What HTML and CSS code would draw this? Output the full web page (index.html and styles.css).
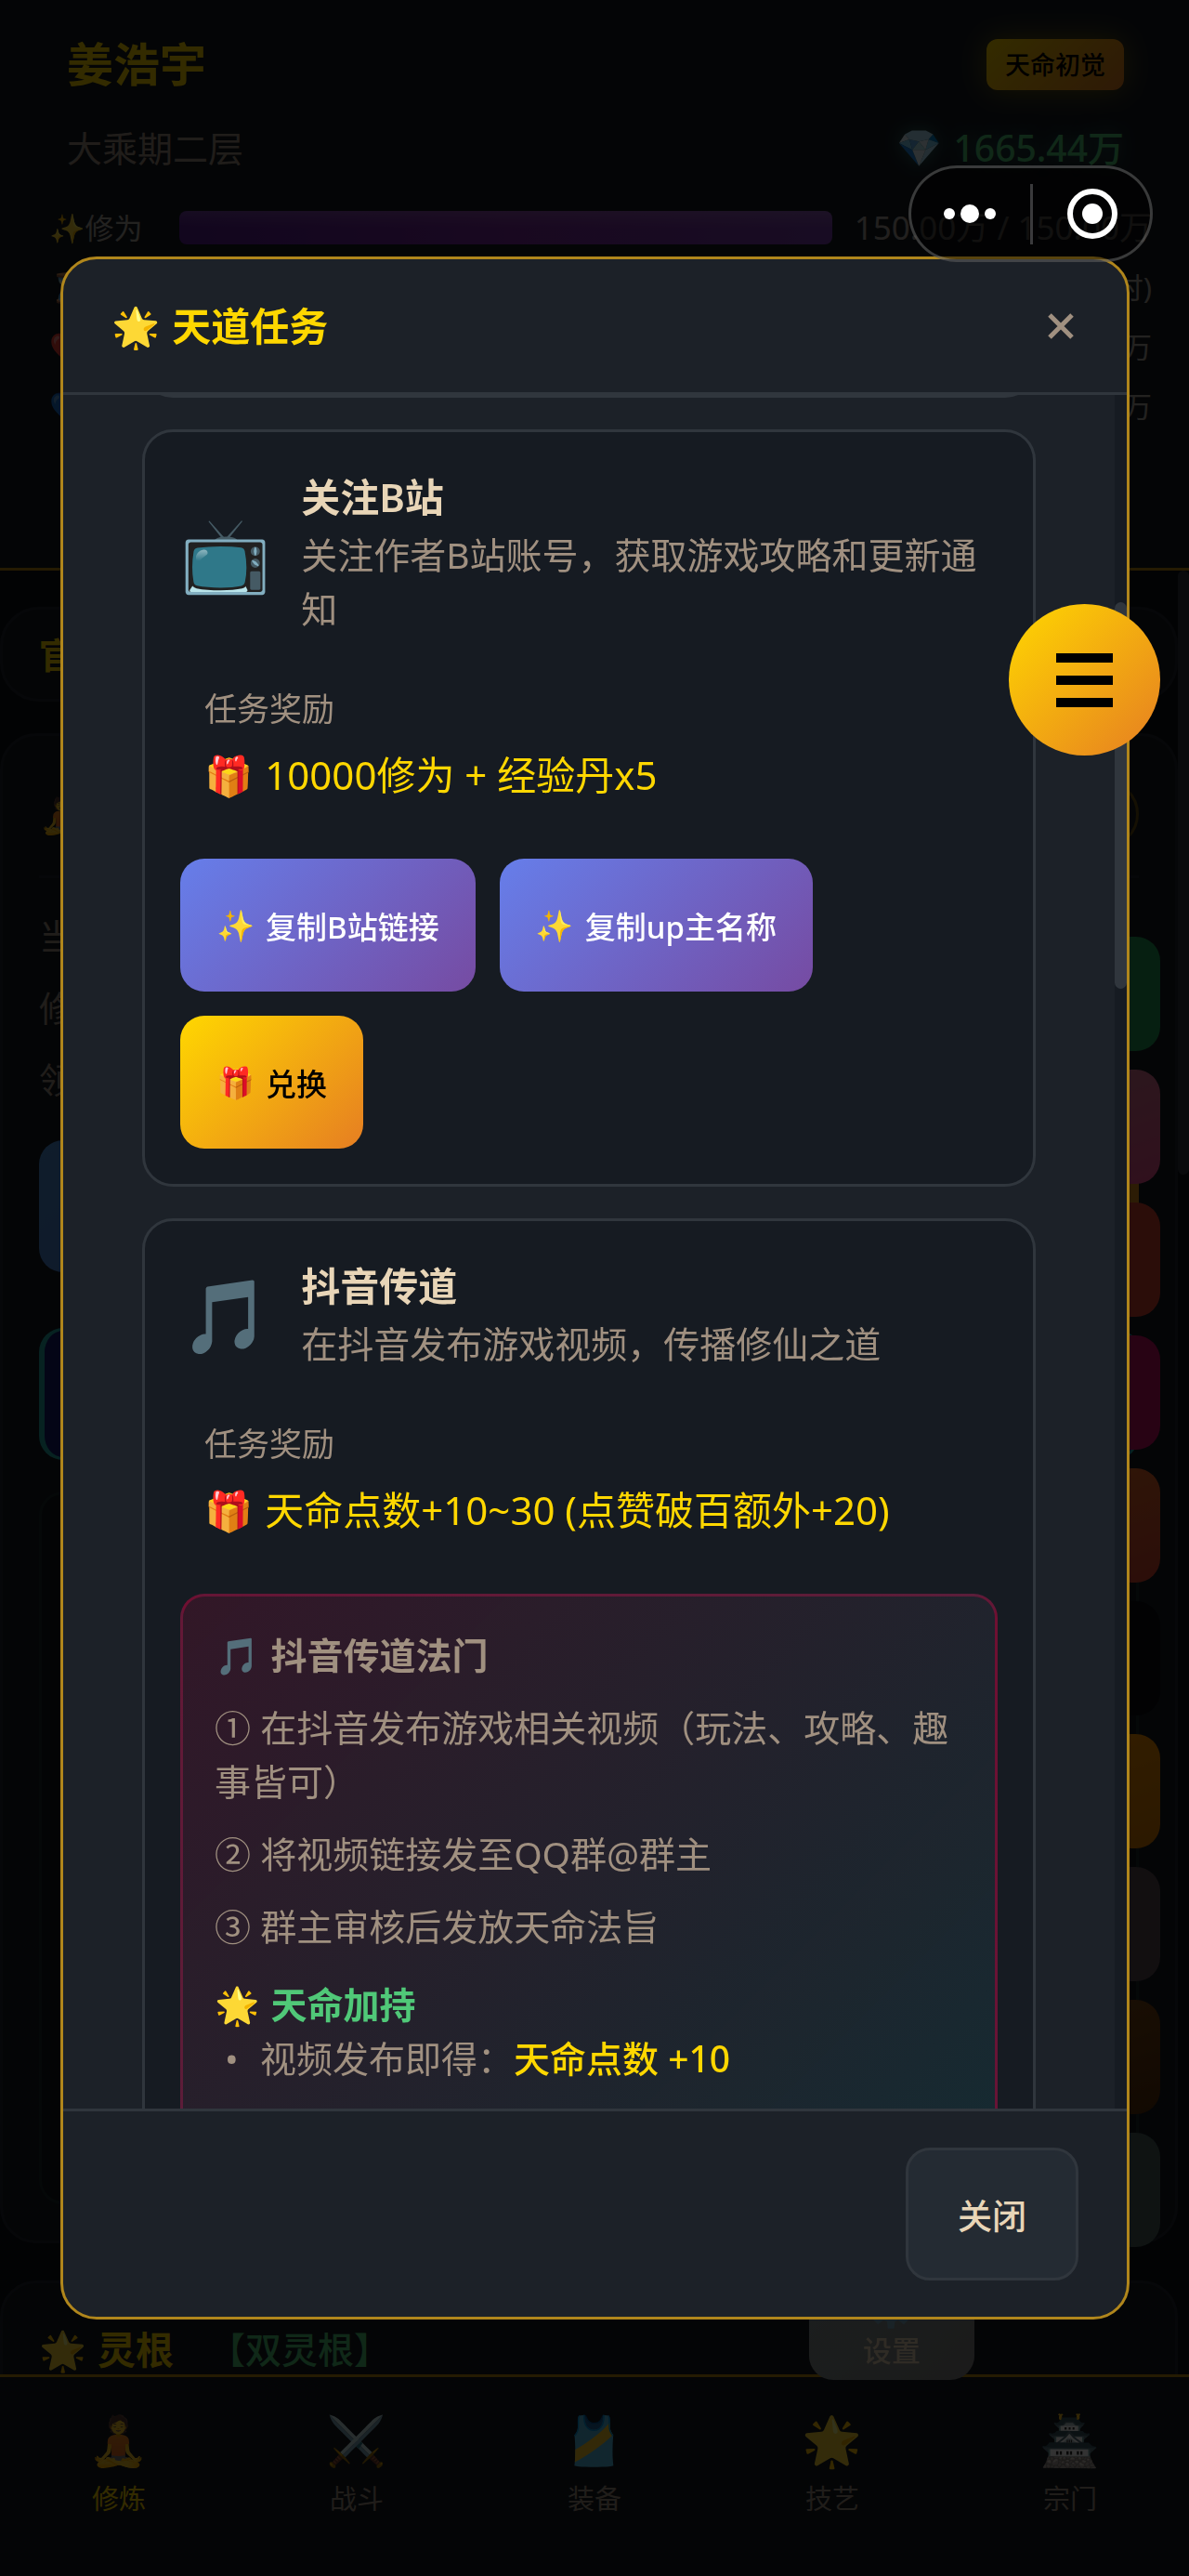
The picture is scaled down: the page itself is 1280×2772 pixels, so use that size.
FILE: index.html
```html
<!DOCTYPE html>
<html lang="zh-CN">
<head>
<meta charset="utf-8">
<meta name="viewport" content="width=device-width, initial-scale=1">
<title>天道任务</title>
<link rel="stylesheet" href="styles.css">
</head>
<body>
<div class="app">
  <header class="status">
    <div class="status-top">
      <h1 class="player">姜浩宇</h1>
      <span class="badge">天命初觉</span>
    </div>
    <div class="status-sub">
      <span class="realm">大乘期二层</span>
      <span class="stones"><span class="gem">💎</span>1665.44万</span>
    </div>
    <div class="stats">
      <div class="stat"><span>✨修为</span><span class="bar"></span><span class="stat-value">150.00万 / 150.00万</span></div>
      <div class="stat"><span>⏳</span><span class="stat-unit">时)</span></div>
      <div class="stat"><span>❤️</span><span class="stat-unit">万</span></div>
      <div class="stat"><span>💙</span><span class="stat-unit">万</span></div>
    </div>
  </header>

  <main class="page">
    <div class="page-content">
      <section class="notice">官</section>
      <section class="panel panel-main">
        <div class="panel-head"><span>🧘</span><span class="chip"></span></div>
        <p class="panel-line">当</p>
        <p class="panel-line">修</p>
        <p class="panel-line">领</p>
        <div class="panel-actions"><span class="act act-blue"></span><span class="act act-gold"></span></div>
        <div class="act-outline"></div>
        <div class="subpanel"></div>
      </section>
      <section class="panel panel-root">
        <h2 class="root-title"><span>🌟</span>灵根<span class="root-kind">【双灵根】</span></h2>
      </section>
    </div>
    <div class="page-track"><div class="page-thumb"></div></div>
  </main>

  <nav class="tabs">
    <a class="tab tab-active" href="#"><span class="tab-icon">🧘</span>修炼</a>
    <a class="tab" href="#"><span class="tab-icon">⚔️</span>战斗</a>
    <a class="tab" href="#"><span class="tab-icon">🎽</span>装备</a>
    <a class="tab" href="#"><span class="tab-icon">🌟</span>技艺</a>
    <a class="tab" href="#"><span class="tab-icon">🏯</span>宗门</a>
  </nav>
</div>

<div class="side-menu">
  <span class="side c1"></span>
  <span class="side c2"></span>
  <span class="side c3"></span>
  <span class="side c4"></span>
  <span class="side c5"></span>
  <span class="side c6"></span>
  <span class="side c7"></span>
  <span class="side c8"></span>
  <span class="side c9"></span>
  <span class="side c10"></span>
  <span class="side side-settings"><span class="side-icon">⚙️</span>设置</span>
</div>

<div class="overlay">
  <div class="modal" role="dialog" aria-labelledby="modal-title">
    <div class="modal-head">
      <h2 class="modal-title" id="modal-title"><span>🌟</span>天道任务</h2>
      <button class="modal-x" type="button" aria-label="关闭窗口">
        <svg width="28" height="28" viewBox="0 0 28 28"><path d="M2 2L26 26M26 2L2 26" stroke="currentColor" stroke-width="5" fill="none"/></svg>
      </button>
    </div>
    <div class="modal-body">
      <div class="tasks">
        <article class="task task-above"></article>

        <article class="task">
          <div class="task-head">
            <span class="task-icon">📺</span>
            <div class="task-text">
              <h3 class="task-name">关注B站</h3>
              <p class="task-desc">关注作者B站账号，获取游戏攻略和更新通知</p>
            </div>
          </div>
          <div class="reward">
            <p class="reward-label">任务奖励</p>
            <p class="reward-value"><span>🎁</span>10000修为 + 经验丹x5</p>
          </div>
          <div class="task-actions">
            <button class="btn btn-copy" type="button"><span>✨</span>复制B站链接</button>
            <button class="btn btn-copy" type="button"><span>✨</span>复制up主名称</button>
            <button class="btn btn-gold" type="button"><span>🎁</span>兑换</button>
          </div>
        </article>

        <article class="task">
          <div class="task-head">
            <span class="task-icon">🎵</span>
            <div class="task-text">
              <h3 class="task-name">抖音传道</h3>
              <p class="task-desc">在抖音发布游戏视频，传播修仙之道</p>
            </div>
          </div>
          <div class="reward">
            <p class="reward-label">任务奖励</p>
            <p class="reward-value"><span>🎁</span>天命点数+10~30 (点赞破百额外+20)</p>
          </div>
          <div class="guide">
            <h4 class="guide-title"><span>🎵</span>抖音传道法门</h4>
            <p class="guide-step">① 在抖音发布游戏相关视频（玩法、攻略、趣事皆可）</p>
            <p class="guide-step">② 将视频链接发至QQ群@群主</p>
            <p class="guide-step">③ 群主审核后发放天命法旨</p>
            <h4 class="guide-title guide-bonus"><span>🌟</span>天命加持</h4>
            <ul class="bonus">
              <li>视频发布即得：<strong>天命点数 +10</strong></li>
              <li>点赞破百额外：<strong>天命点数 +20</strong></li>
            </ul>
          </div>
        </article>
      </div>
      <div class="track"><div class="thumb"></div></div>
    </div>
    <div class="modal-foot">
      <button class="btn-close" type="button">关闭</button>
    </div>
  </div>
</div>

<button class="fab" type="button" aria-label="菜单"><span></span><span></span><span></span></button>

<div class="capsule">
  <svg class="capsule-dots" width="56" height="20" viewBox="0 0 56 20"><circle cx="6" cy="10" r="6"/><circle cx="28" cy="10" r="10"/><circle cx="50" cy="10" r="6"/></svg>
  <span class="capsule-line"></span>
  <svg class="capsule-ring" width="54" height="54" viewBox="0 0 54 54"><circle cx="27" cy="27" r="24" fill="none" stroke="#fff" stroke-width="6"/><circle cx="27" cy="27" r="11"/></svg>
</div>
</body>
</html>
```

FILE: styles.css
```css
:root {
  --gold: #ffd700;
  --text: #e8d5b7;
  --muted: #a09080;
  --line: #30363d;
  --card: #161b22;
  --surface: #1c2128;
  --gold-fill: linear-gradient(135deg, #ffd700, #e67e22);
}

* { box-sizing: border-box; }

body {
  margin: 0;
  background: #0d1117;
  color: var(--text);
  font-family: "Noto Sans", "Noto Sans CJK SC", "Noto Color Emoji", sans-serif;
  font-size: 38px;
  overflow: hidden;
}

h1, h2, h3, h4, p, ul { margin: 0; padding: 0; font-weight: 400; }
button { font-family: inherit; cursor: pointer; }

.app {
  display: flex;
  flex-direction: column;
  height: 100vh;
}

/* player status */
.status {
  flex: none;
  height: 614px;
  padding: 32px 0 0;
  background: var(--card);
  border-bottom: 3px solid #b8860b;
}
.status-top, .status-sub {
  display: flex;
  align-items: center;
  justify-content: space-between;
  padding: 0 70px 0 72px;
}
.status-top { height: 74px; }
.status-sub { height: 58px; margin-top: 22px; }
.player { font-size: 50px; line-height: 74px; font-weight: 700; color: var(--gold); }
.badge {
  padding: 0 20px;
  border-radius: 12px;
  background: var(--gold-fill);
  box-shadow: 0 0 33px rgba(255, 215, 0, .4);
  color: #000;
  font-size: 27px;
  line-height: 55px;
  font-weight: 500;
}
.realm { font-size: 38px; color: var(--muted); }
.stones {
  display: flex;
  align-items: center;
  gap: 13px;
  color: #50c878;
  font-size: 39px;
  font-weight: 500;
  text-shadow: 0 0 20px rgba(80, 200, 180, .5);
}
.stats {
  display: flex;
  flex-direction: column;
  gap: 24px;
  margin-top: 39px;
  padding: 0 40px 0 53px;
  color: #b0a8a0;
  font-size: 31px;
  line-height: 40px;
}
.stat { display: flex; align-items: center; justify-content: space-between; height: 40px; }
.bar {
  flex: 1;
  height: 36px;
  margin: 0 22px 0 39px;
  border-radius: 8px;
  background: linear-gradient(180deg, rgba(255, 255, 255, .15), rgba(255, 255, 255, 0) 50%), linear-gradient(90deg, #5a1e96, #7c2ba0 50%, #7a3eae);
}
.stat-value { min-width: 322px; color: #a8a29a; font-size: 35px; text-align: right; }

/* scrolling page */
.page { flex: 1; min-height: 0; display: flex; overflow: hidden; }
.page-content { flex: 1; padding-top: 39px; }
.page-track { width: 12px; background: #0d1117; }
.page-thumb { height: 650px; border-radius: 6px; background: var(--line); }
.notice {
  height: 102px;
  padding: 0 39px;
  border: 3px solid #21262d;
  border-radius: 42px;
  background: var(--card);
  color: var(--gold);
  font-weight: 700;
  line-height: 96px;
}
.panel {
  padding: 39px;
  border: 3px solid #21262d;
  border-radius: 39px;
  background: var(--card);
}
.panel-main { height: 1625px; margin-top: 34px; }
.panel-head {
  display: flex;
  align-items: center;
  justify-content: space-between;
  height: 114px;
  margin-bottom: 24px;
  padding-bottom: 22px;
  border-bottom: 3px solid #21262d;
}
.chip { width: 200px; height: 74px; border: 3px solid #6a5010; border-radius: 37px; }
.panel-line { height: 77px; line-height: 77px; color: var(--muted); }
.panel-actions { display: flex; gap: 26px; margin-top: 27px; }
.act { flex: 1; height: 142px; border-radius: 26px; }
.act-blue { background: linear-gradient(135deg, #4a90d9, #5a5fc0); }
.act-gold { background: #d98a1a; }
.act-outline {
  height: 142px;
  margin-top: 60px;
  border: 3px solid #24a8a4;
  border-left-width: 6px;
  border-radius: 26px;
  background: #141a70;
}
.subpanel {
  height: 767px;
  margin-top: 34px;
  border: 3px solid #1a2a2c;
  border-radius: 26px;
  background: #10151b;
}
.panel-root { margin-top: 40px; }
.root-title {
  display: flex;
  align-items: center;
  gap: 12px;
  height: 64px;
  font-size: 41px;
  line-height: 60px;
  font-weight: 700;
  color: var(--gold);
}
.root-kind { margin-left: 26px; color: #50c878; font-size: 39px; font-weight: 500; }

/* bottom tabs */
.tabs {
  flex: none;
  display: grid;
  grid-template-columns: repeat(5, 1fr);
  height: 217px;
  padding-top: 25px;
  background: var(--card);
  border-top: 3px solid #b8860b;
}
.tab {
  display: flex;
  flex-direction: column;
  align-items: center;
  gap: 4px;
  color: var(--muted);
  font-size: 29px;
  line-height: 44px;
  text-decoration: none;
}
.tab-active { color: var(--gold); }
.tab-icon { font-size: 52px; line-height: 84px; margin-bottom: -4px; }

/* expanded quick menu */
.side-menu {
  position: fixed;
  top: 1008px;
  right: 31px;
  display: flex;
  flex-direction: column;
  align-items: flex-end;
  gap: 20px;
}
.side { width: 178px; height: 123px; border-radius: 26px; }
.c1 { background: #219a54; }
.c2 { background: linear-gradient(160deg, #d08090, #f05090); }
.c3 { background: #d84430; }
.c4 { background: #c80f64; }
.c5 { background: linear-gradient(160deg, #f07828, #d84430); }
.c6 { background: #0b0d12; }
.c7 { background: linear-gradient(160deg, #ff9800, #d97a00); }
.c8 { background: #5a4a50; }
.c9 { background: linear-gradient(160deg, #8a5018, #5a300c); }
.c10 { background: #4a605c; }
.side-settings {
  display: flex;
  flex-direction: column;
  align-items: center;
  justify-content: flex-end;
  margin-right: 200px;
  padding-bottom: 10px;
  background: linear-gradient(135deg, #8a9899, #888684);
  color: #e8d5b7;
  font-size: 31px;
  line-height: 44px;
  font-weight: 500;
}
.side-icon { font-size: 42px; line-height: 52px; }

/* dialog */
.overlay {
  position: fixed;
  inset: 0;
  display: flex;
  padding: 276px 64px 276px 65px;
  background: rgba(0, 0, 0, .8);
}
.modal {
  flex: 1;
  display: flex;
  flex-direction: column;
  border: 3px solid #b0861c;
  border-radius: 39px;
  background: var(--surface);
  overflow: hidden;
}
.modal-head {
  flex: none;
  display: flex;
  align-items: center;
  justify-content: space-between;
  height: 146px;
  padding: 0 57px 0 52px;
  border-bottom: 3px solid var(--line);
}
.modal-title {
  display: flex;
  align-items: center;
  gap: 13px;
  font-size: 42px;
  line-height: 63px;
  font-weight: 600;
  color: var(--gold);
}
.modal-x { display: flex; padding: 0; border: 0; background: none; color: var(--muted); }
.modal-body { flex: 1; min-height: 0; display: flex; overflow: hidden; }
.tasks { flex: 1; padding: 0 85px; overflow: hidden; }
.track { width: 13px; background: var(--card); }
.thumb { height: 416px; margin-top: 223px; border-radius: 7px; background: var(--line); }

.task {
  margin-bottom: 34px;
  padding: 38px;
  border: 3px solid var(--line);
  border-radius: 33px;
  background: var(--card);
}
.task-above { margin-top: -79px; }
.task-head { display: flex; align-items: center; gap: 33px; }
.task-icon { flex: none; font-size: 78px; line-height: 98px; }
.task-name { font-size: 42px; line-height: 63px; font-weight: 600; color: var(--text); }
.task-desc { margin-top: 2px; font-size: 39px; line-height: 58px; color: var(--muted); }
.reward { margin-top: 26px; padding: 26px; }
.reward-label { font-size: 35px; line-height: 53px; color: var(--muted); }
.reward-value {
  display: flex;
  align-items: center;
  gap: 13px;
  margin-top: 13px;
  font-size: 42px;
  line-height: 63px;
  color: var(--gold);
}
.task-actions { display: flex; flex-wrap: wrap; gap: 26px; margin-top: 33px; }
.btn {
  display: flex;
  align-items: center;
  gap: 12px;
  height: 143px;
  padding: 0 39px;
  border: 0;
  border-radius: 26px;
  font-size: 33px;
  font-weight: 500;
}
.btn-copy { background: linear-gradient(135deg, #667eea, #764ba2); color: #fff; }
.btn-gold { background: var(--gold-fill); color: #000; }

.guide {
  margin-top: 33px;
  padding: 34px;
  border: 3px solid rgba(255, 0, 80, .3);
  border-radius: 26px;
  background: linear-gradient(135deg, rgba(255, 0, 80, .12), rgba(0, 242, 234, .08));
  color: var(--muted);
  font-size: 39px;
  line-height: 58px;
}
.guide-title { display: flex; gap: 12px; font-size: 39px; font-weight: 600; }
.guide-step { margin-top: 20px; }
.guide-bonus { margin-top: 26px; color: #50c878; }
.bonus { list-style: none; }
.bonus li { display: flex; margin-bottom: 20px; }
.bonus li::before { content: "•"; flex: none; box-sizing: border-box; width: 49px; padding-left: 11px; }
.bonus strong { color: var(--gold); font-weight: 500; }

.modal-foot {
  flex: none;
  display: flex;
  justify-content: flex-end;
  padding: 39px 52px;
  border-top: 3px solid var(--line);
}
.btn-close {
  width: 186px;
  height: 143px;
  border: 3px solid var(--line);
  border-radius: 26px;
  background: #242b33;
  color: var(--text);
  font-size: 37px;
  font-weight: 500;
}

.fab {
  position: fixed;
  top: 650px;
  right: 31px;
  display: flex;
  flex-direction: column;
  align-items: center;
  justify-content: center;
  gap: 14px;
  width: 163px;
  height: 163px;
  border: 0;
  border-radius: 50%;
  background: var(--gold-fill);
}
.fab span { width: 61px; height: 10px; background: #000; }

.capsule {
  position: fixed;
  top: 178px;
  right: 39px;
  display: flex;
  align-items: center;
  justify-content: space-between;
  width: 263px;
  height: 104px;
  padding: 0 35px;
  border: 3px solid rgba(255, 255, 255, .22);
  border-radius: 52px;
  background: rgba(0, 0, 0, .5);
}
.capsule svg { fill: #fff; }
.capsule-line { width: 3px; height: 65px; background: #3a3a3c; }
```
